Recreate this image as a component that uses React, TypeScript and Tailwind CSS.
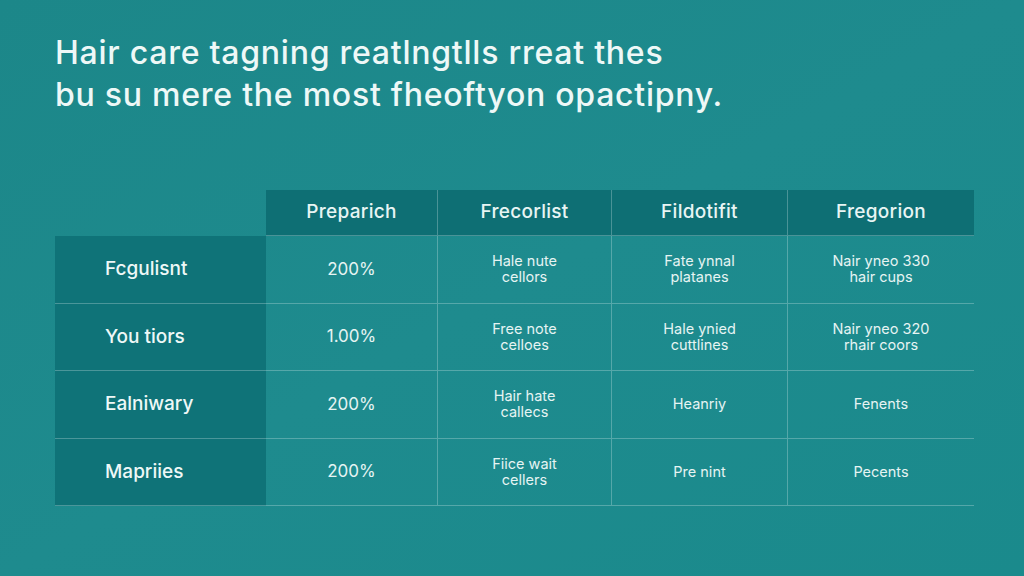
import React from 'react';

const COLUMNS = ['Preparich', 'Frecorlist', 'Fildotifit', 'Fregorion'];

// each row: label, then four cells (a cell may hold two lines)
const ROWS: { label: string; cells: string[][] }[] = [
  { label: 'Fcgulisnt', cells: [['200%'], ['Hale nute', 'cellors'], ['Fate ynnal', 'platanes'], ['Nair yneo 330', 'hair cups']] },
  { label: 'You tiors', cells: [['1.00%'], ['Free note', 'celloes'], ['Hale ynied', 'cuttlines'], ['Nair yneo 320', 'rhair coors']] },
  { label: 'Ealniwary', cells: [['200%'], ['Hair hate', 'callecs'], ['Heanriy'], ['Fenents']] },
  { label: 'Mapriies', cells: [['200%'], ['Fiice wait', 'cellers'], ['Pre nint'], ['Pecents']] },
];

const GRID = 'grid grid-cols-[211px_172px_174px_176px_186px]';

export default function App() {
  return (
    <div
      className="w-[1024px] h-[576px] overflow-hidden bg-gradient-to-br from-[#1c8789] via-[#1e8b8e] to-[#1a8a8c] text-white"
      style={{ fontFamily: 'Inter, "Open Sans", sans-serif' }}
    >
      {/* Title */}
      <div className="pl-[55px] pt-[32px]">
        <h1 className="text-[32px] leading-[42px] font-medium tracking-[0.75px] text-[#eef8f7]">
          Hair care tagning reatlngtlls rreat thes
          <br />
          bu su mere the most fheoftyon opactipny.
        </h1>
      </div>

      {/* Table */}
      <div className="ml-[55px] mt-[74px] w-[919px]">
        {/* Header */}
        <div className={`${GRID} h-[46px]`}>
          <div />
          {COLUMNS.map((c, i) => (
            <div
              key={c}
              className={`flex items-center justify-center bg-[#0e6f74] text-[19px] font-medium tracking-[0.3px] text-[#e8f5f4] border-b border-white/25 ${
                i < COLUMNS.length - 1 ? 'border-r border-white/25' : ''
              }`}
            >
              {c}
            </div>
          ))}
        </div>

        {/* Body */}
        {ROWS.map((row) => (
          <div key={row.label} className={`${GRID} h-[67.5px]`}>
            <div className="flex items-center pl-[50px] bg-[#0f7378] border-b border-white/25 text-[19px] font-medium text-[#eef8f7]">
              {row.label}
            </div>
            {row.cells.map((lines, i) => (
              <div
                key={i}
                className={`flex flex-col items-center justify-center border-b border-white/25 text-[#e6f4f3] ${
                  i < row.cells.length - 1 ? 'border-r border-white/25' : ''
                } ${i === 0 ? 'text-[17px]' : 'text-[14.5px] leading-[16px]'}`}
              >
                {lines.map((l) => (
                  <span key={l}>{l}</span>
                ))}
              </div>
            ))}
          </div>
        ))}
      </div>
    </div>
  );
}
